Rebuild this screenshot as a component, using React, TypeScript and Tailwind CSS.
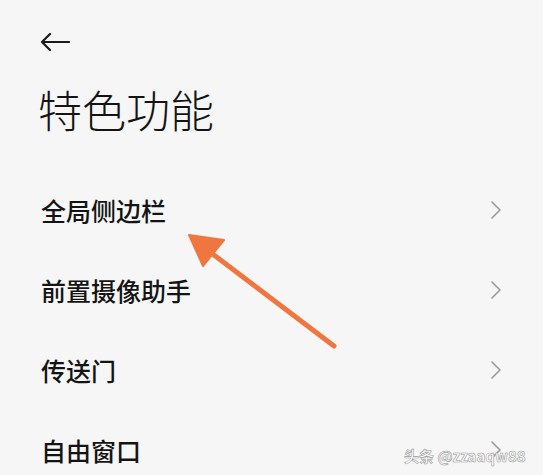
import React from "react";

const items = ["全局侧边栏", "前置摄像助手", "传送门", "自由窗口"];

function BackArrow() {
  return (
    <svg width="30" height="20" viewBox="0 0 30 20" fill="none">
      <path d="M29 10H2M10 2L2 10L10 18" stroke="#1a1a1a" strokeWidth="2.2" strokeLinecap="round" strokeLinejoin="round" />
    </svg>
  );
}

function Chevron() {
  return (
    <svg width="12" height="20" viewBox="0 0 12 20" fill="none">
      <path d="M2 2L10 10L2 18" stroke="#9a9a9a" strokeWidth="1.6" strokeLinecap="round" strokeLinejoin="round" />
    </svg>
  );
}

export default function App() {
  return (
    <div
      className="relative w-[543px] h-[475px] overflow-hidden bg-[#f6f6f6] text-[#141414]"
      style={{ fontFamily: '"Noto Sans CJK SC", "Noto Sans", sans-serif' }}
    >
      <div className="pt-[32px] pl-[40px]">
        <BackArrow />
      </div>
      <h1 className="mt-[27px] pl-[38px] text-[44px] leading-[60px] font-light tracking-[0px]">特色功能</h1>
      <ul className="mt-[31px] flex flex-col">
        {items.map((t) => (
          <li key={t} className="flex h-[80px] items-center justify-between pl-[41px] pr-[41px]">
            <span className="text-[25px] font-medium leading-none">{t}</span>
            <Chevron />
          </li>
        ))}
      </ul>

      {/* annotation arrow pointing at the first entry */}
      <svg className="absolute left-0 top-0" width="543" height="475" viewBox="0 0 543 475">
        <path d="M334 346 L210 252" stroke="#f0763f" strokeWidth="5" strokeLinecap="round" />
        <polygon points="189,235 224,240 203,266" fill="#f0763f" stroke="#f0763f" strokeWidth="2" strokeLinejoin="round" />
      </svg>

      <div className="absolute left-[404px] top-[446px] text-[15px] leading-[20px] font-bold text-white [-webkit-text-stroke:0.6px_#9b9b9b] tracking-[0px]">
        头条 @zzaaqw88
      </div>
    </div>
  );
}
